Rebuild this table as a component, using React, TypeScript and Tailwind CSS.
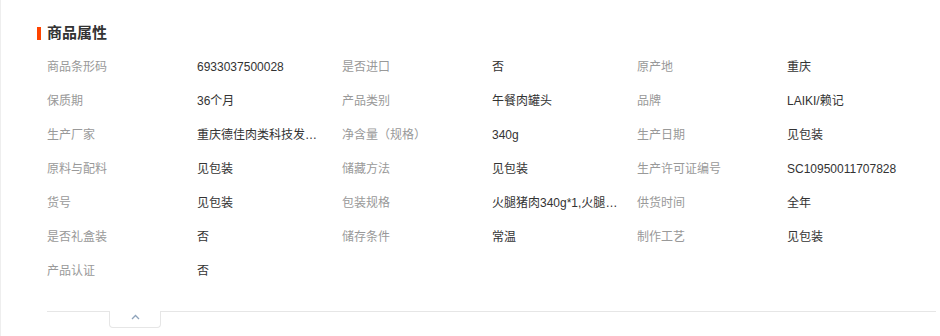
import React from "react";

const rows: [string, string][][] = [
  [["商品条形码", "6933037500028"], ["是否进口", "否"], ["原产地", "重庆"]],
  [["保质期", "36个月"], ["产品类别", "午餐肉罐头"], ["品牌", "LAIKI/赖记"]],
  [["生产厂家", "重庆德佳肉类科技发展有限公司"], ["净含量（规格）", "340g"], ["生产日期", "见包装"]],
  [["原料与配料", "见包装"], ["储藏方法", "见包装"], ["生产许可证编号", "SC10950011707828"]],
  [["货号", "见包装"], ["包装规格", "火腿猪肉340g*1,火腿猪肉340g*2"], ["供货时间", "全年"]],
  [["是否礼盒装", "否"], ["储存条件", "常温"], ["制作工艺", "见包装"]],
  [["产品认证", "否"]],
];

export default function App() {
  return (
    <div
      className="w-[940px] h-[336px] bg-white border-l border-[#eeeeee] overflow-hidden"
      style={{ fontFamily: '"Liberation Sans", "Noto Sans CJK SC", sans-serif' }}
    >
      <div className="flex items-center h-[20px] mt-[23px] pl-[36px]">
        <div className="w-[4px] h-[13px] bg-[#ff4400]" />
        <div className="ml-[6px] text-[15px] leading-[20px] font-bold text-[#333333]">商品属性</div>
      </div>
      <div className="mt-[7px] pl-[46px]">
        {rows.map((row, i) => (
          <div key={i} className="flex h-[34px] items-center text-[12px]">
            {row.map(([label, value], j) => (
              <div key={j} className="flex items-center w-[295px]">
                <div className="w-[150px] text-[#999999]">{label}</div>
                <div className="w-[145px] text-[#333333]">
                  <div className="max-w-[127px] truncate">{value}</div>
                </div>
              </div>
            ))}
          </div>
        ))}
      </div>
      <div className="ml-[46px] mt-[23px] w-[889px] border-t border-[#e6e6e6]">
        <div className="ml-[62px] -mt-[1px] w-[52px] h-[17px] bg-white border-x border-b border-[#e6e6e6] rounded-b-[4px] flex items-center justify-center">
          <svg width="9" height="6" viewBox="0 0 9 6" className="-mt-[4px]">
            <path d="M1 5 L4.5 1.5 L8 5" fill="none" stroke="#8ea3bb" strokeWidth="1.3" />
          </svg>
        </div>
      </div>
    </div>
  );
}
